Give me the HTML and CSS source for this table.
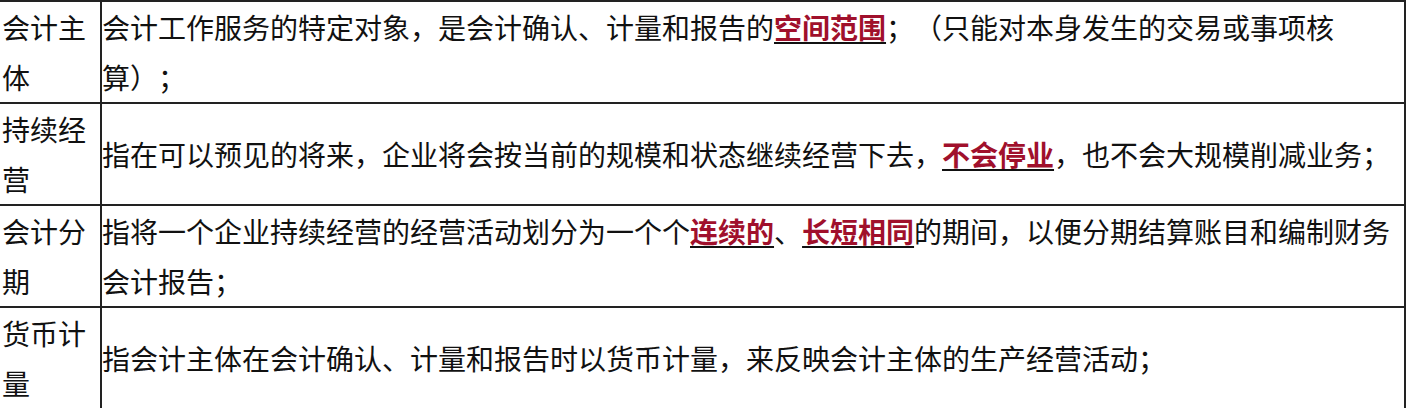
FILE: index.html
```html
<!DOCTYPE html>
<html lang="zh-CN">
<head>
<meta charset="utf-8">
<title>会计基本假设</title>
<link rel="stylesheet" href="styles.css">
</head>
<body>
<table class="grid">
  <colgroup>
    <col class="c-term">
    <col class="c-desc">
  </colgroup>
  <tbody>
    <tr>
      <td class="term">会计主体</td>
      <td class="desc">会计工作服务的特定对象，是会计确认、计量和报告的<u class="mark"><strong class="hl">空间范围</strong></u>；（只能对本身发生的交易或事项核算）；</td>
    </tr>
    <tr>
      <td class="term">持续经营</td>
      <td class="desc">指在可以预见的将来，企业将会按当前的规模和状态继续经营下去，<u class="mark"><strong class="hl">不会停业</strong></u>，也不会大规模削减业务；</td>
    </tr>
    <tr>
      <td class="term">会计分期</td>
      <td class="desc">指将一个企业持续经营的经营活动划分为一个个<u class="mark"><strong class="hl">连续的</strong></u>、<u class="mark"><strong class="hl">长短相同</strong></u>的期间，以便分期结算账目和编制财务会计报告；</td>
    </tr>
    <tr>
      <td class="term">货币计量</td>
      <td class="desc">指会计主体在会计确认、计量和报告时以货币计量，来反映会计主体的生产经营活动；</td>
    </tr>
  </tbody>
</table>
</body>
</html>
```

FILE: styles.css
```css
html, body {
  margin: 0;
  padding: 0;
  background: #ffffff;
}

body {
  font-family: "Noto Sans CJK SC", "Noto Sans", sans-serif;
  font-size: 28px;
  line-height: 50px;
  color: #111111;
  text-spacing-trim: space-all;
  font-feature-settings: "halt" 0, "chws" 0, "palt" 0;
}

.grid {
  width: 1406px;
  table-layout: fixed;
  border-collapse: separate;
  border-spacing: 0;
  border-top: 2px solid #222222;
  border-right: 2px solid #222222;
}

.c-term {
  width: 102px;
}

.grid td {
  padding: 0;
  vertical-align: middle;
  border-bottom: 2px solid #222222;
  word-break: normal;
  line-break: strict;
}

.term {
  padding-left: 2px !important;
  border-right: 2px solid #222222;
}

.desc {
  padding-left: 0;
}

.mark {
  text-decoration: underline;
  text-decoration-color: #111111;
  text-decoration-thickness: 2px;
  text-underline-offset: 3px;
}

.hl {
  color: #a0102c;
  font-weight: 700;
}
```
